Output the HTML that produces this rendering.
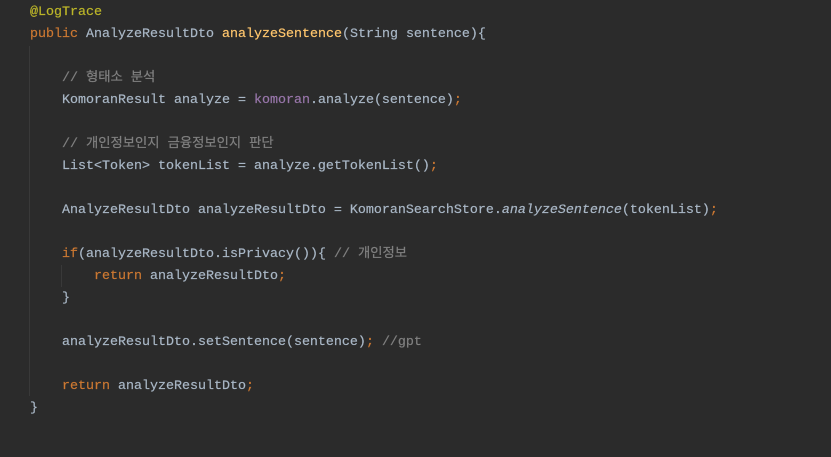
<!DOCTYPE html>
<html><head><meta charset="utf-8"><style>
html,body{margin:0;padding:0;background:#2b2b2b;width:831px;height:457px;overflow:hidden}
pre{margin:0;position:absolute;left:30px;top:2px;font-family:"Liberation Mono","Noto Sans CJK KR",monospace;font-size:13.33px;line-height:22px;color:#a9b7c6;-webkit-text-stroke:0.2px}
.k{color:#cc7832}.a{color:#bbb529}.m{color:#ffc66d}.c{color:#808080}.f{color:#9876aa}.i{font-style:italic}
.g{position:absolute;width:1px;background:#393939}
</style></head><body>
<div class="g" style="left:29px;top:46px;height:350px"></div>
<div class="g" style="left:61px;top:265px;height:22px"></div>
<pre><span class="a">@LogTrace</span>
<span class="k">public</span> AnalyzeResultDto <span class="m">analyzeSentence</span>(String sentence){

    <span class="c">// 형태소 분석</span>
    KomoranResult analyze = <span class="f">komoran</span>.analyze(sentence)<span class="k">;</span>

    <span class="c">// 개인정보인지 금융정보인지 판단</span>
    List&lt;Token&gt; tokenList = analyze.getTokenList()<span class="k">;</span>

    AnalyzeResultDto analyzeResultDto = KomoranSearchStore.<span class="i">analyzeSentence</span>(tokenList)<span class="k">;</span>

    <span class="k">if</span>(analyzeResultDto.isPrivacy()){ <span class="c">// 개인정보</span>
        <span class="k">return</span> analyzeResultDto<span class="k">;</span>
    }

    analyzeResultDto.setSentence(sentence)<span class="k">;</span> <span class="c">//gpt</span>

    <span class="k">return</span> analyzeResultDto<span class="k">;</span>
}</pre>
</body></html>
